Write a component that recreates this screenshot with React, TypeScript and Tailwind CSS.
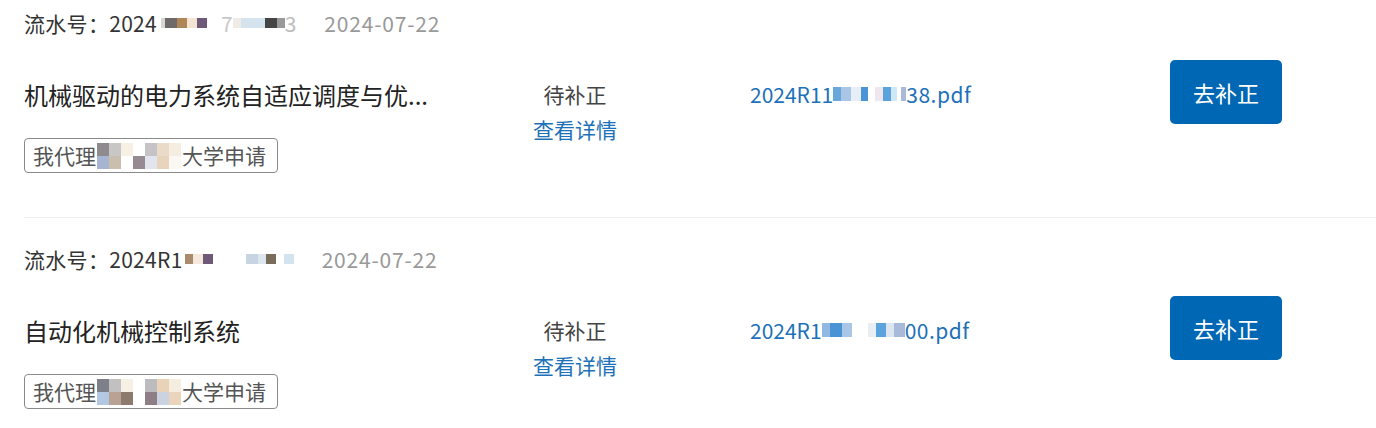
import React from "react";

type Block = [string, number];

function Mosaic({ blocks, h = 10 }: { blocks: Block[]; h?: number }) {
  return (
    <span className="inline-flex items-center align-middle blur-[0.6px]">
      {blocks.map(([c, w], i) => (
        <span key={i} style={{ backgroundColor: c, width: w, height: h }} className="inline-block" />
      ))}
    </span>
  );
}

function TagMosaic({ top, bottom }: { top: Block[]; bottom: Block[] }) {
  return (
    <span className="inline-flex flex-col align-middle blur-[0.7px] -my-[4px] mx-[1px]">
      <span className="flex">
        {top.map(([c, w], i) => (
          <span key={i} style={{ backgroundColor: c, width: w, height: 13 }} className="inline-block" />
        ))}
      </span>
      <span className="flex">
        {bottom.map(([c, w], i) => (
          <span key={i} style={{ backgroundColor: c, width: w, height: 13 }} className="inline-block" />
        ))}
      </span>
    </span>
  );
}

type Item = {
  metaPrefix: string;
  metaMosaic: React.ReactNode;
  title: string;
  fileStart: string;
  fileMosaic: React.ReactNode;
  fileEnd: string;
  tagMosaic: React.ReactNode;
  last?: boolean;
};

function Row({ item }: { item: Item }) {
  return (
    <div className={`pt-[29px] ${item.last ? "pb-[20px]" : "pb-[44px] border-b border-[#eeeeee]"}`}>
      <div className="flex items-center h-6 leading-6 text-[21px]">
        <span className="text-[#333333] tracking-[0.3px]">流水号：{item.metaPrefix}</span>
        {item.metaMosaic}
        <span className="ml-[28px] text-[#999999] tracking-[0.8px]">2024-07-22</span>
      </div>
      <div className="flex items-start mt-[25px]">
        <div className="w-[460px]">
          <div className="mt-[19px] leading-8 text-[24px] text-[#222222]">{item.title}</div>
          <div className="mt-[27px] inline-flex items-center h-[35px] pl-[8px] pr-[11px] border border-[#8a8a8a] rounded-[4px] text-[21px] text-[#555555]">
            <span>我代理</span>
            {item.tagMosaic}
            <span>大学申请</span>
          </div>
        </div>
        <div className="w-[182px] flex flex-col items-center text-[21px]">
          <div className="mt-[19px] leading-[30px] text-[#444444]">待补正</div>
          <div className="mt-[5px] leading-[30px] text-[#1d71b8]">查看详情</div>
        </div>
        <div className="ml-[84px] flex-1 mt-[19px] leading-[30px] text-[21px] text-[#1d71b8] flex items-center">
          <span>{item.fileStart}</span>
          {item.fileMosaic}
          <span className="tracking-[0.5px]">{item.fileEnd}</span>
        </div>
        <button className="mr-[94px] w-[112px] h-[64px] rounded-[5px] bg-[#0067b5] text-white text-[22px]">
          去补正
        </button>
      </div>
    </div>
  );
}

export default function App() {
  const items: Item[] = [
    {
      metaPrefix: "2024",
      metaMosaic: (
        <span className="inline-flex items-center ml-[4px]">
          <Mosaic blocks={[["#d8d6d6", 4], ["#6f6a69", 12], ["#b08658", 10], ["#f3e4d4", 10], ["#6e5a78", 10]]} />
          <span className="ml-[14px] text-[#c9c9c9]">7</span>
          <Mosaic blocks={[["#efebe7", 8], ["#d5e3ee", 24], ["#454545", 12], ["#999999", 8]]} />
          <span className="text-[#bdbdbd]">3</span>
        </span>
      ),
      title: "机械驱动的电力系统自适应调度与优...",
      fileStart: "2024R11",
      fileMosaic: <Mosaic h={14} blocks={[["#6aa7dc", 8], ["#a9c6e6", 10], ["#e8eef6", 10], ["#4a94d6", 7], ["#ffffff", 7], ["#efe6ee", 8], ["#5aa3dc", 8], ["#cfe8f7", 6], ["#ffffff", 4], ["#a8b9da", 5]]} />,
      fileEnd: "38.pdf",
      tagMosaic: (
        <TagMosaic
          top={[["#8e8a8d", 12], ["#c9c6c6", 12], ["#f6f1e4", 12], ["#ffffff", 12], ["#c5c3c6", 12], ["#eadbc8", 12], ["#f6ede1", 12]]}
          bottom={[["#a7b5d3", 12], ["#c9bfae", 12], ["#ffffff", 12], ["#968b91", 12], ["#e2e5ee", 12], ["#e8d4bd", 12], ["#fbf7f2", 12]]}
        />
      ),
    },
    {
      metaPrefix: "2024R1",
      metaMosaic: (
        <span className="inline-flex items-center ml-[2px]">
          <Mosaic blocks={[["#a88b6c", 8], ["#f5e8dc", 10], ["#6e5a78", 10]]} />
          <span className="inline-block w-[33px]" />
          <Mosaic blocks={[["#c7d5e2", 12], ["#dde6ee", 8], ["#7a6c5a", 10], ["#ffffff", 8], ["#d3e3f0", 10]]} />
        </span>
      ),
      title: "自动化机械控制系统",
      fileStart: "2024R1",
      fileMosaic: <Mosaic h={14} blocks={[["#8fb9e2", 8], ["#4a94d6", 12], ["#a9c6e6", 10], ["#ffffff", 16], ["#e9eef5", 8], ["#5aa3dc", 10], ["#dbe6f2", 8], ["#a8b9da", 11]]} />,
      fileEnd: "00.pdf",
      tagMosaic: (
        <TagMosaic
          top={[["#7d8089", 12], ["#c2c0c0", 12], ["#f6f1e4", 12], ["#ffffff", 12], ["#bcbbbd", 12], ["#e8d2b8", 12], ["#f6ede1", 12]]}
          bottom={[["#b3c6e2", 12], ["#b9a294", 12], ["#8c7a6e", 12], ["#ffffff", 12], ["#8e7f86", 12], ["#cbd3e0", 12], ["#ead4bb", 12]]}
        />
      ),
      last: true,
    },
  ];
  return (
    <div
      className="w-[1376px] h-[428px] overflow-hidden bg-white"
      style={{ fontFamily: '"Noto Sans CJK SC", "Noto Sans", sans-serif' }}
    >
      <div className="-mt-[18px] pl-6">
        {items.map((it, i) => (
          <Row key={i} item={it} />
        ))}
      </div>
    </div>
  );
}
